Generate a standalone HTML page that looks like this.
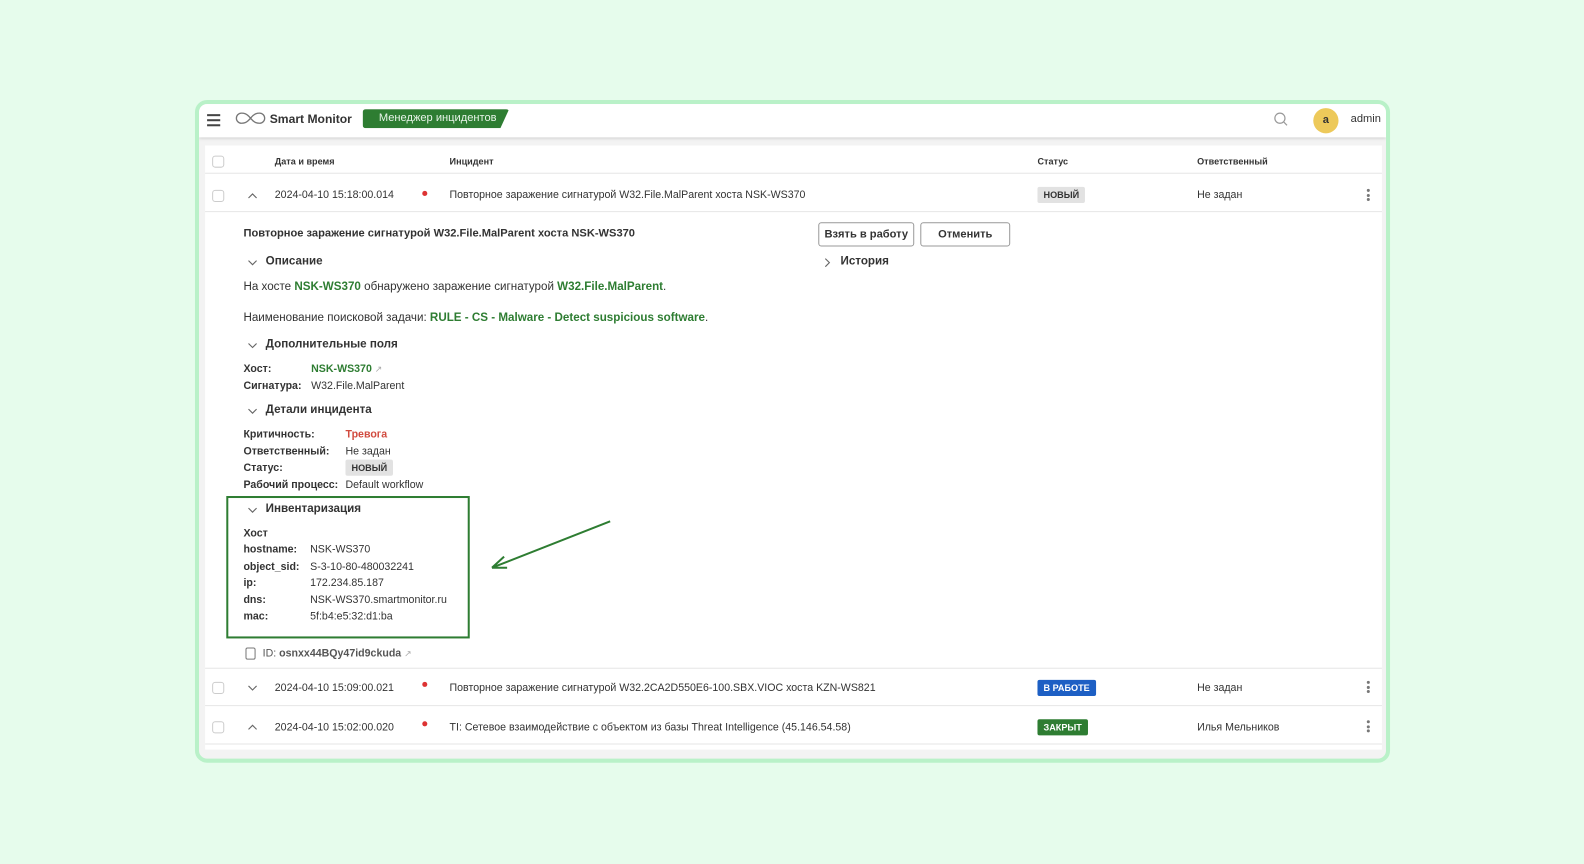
<!DOCTYPE html>
<html><head><meta charset="utf-8"><style>
*{margin:0;padding:0;box-sizing:border-box}
body{width:1584px;height:864px;background:#e6fcec;font-family:"Liberation Sans",sans-serif;color:#333;position:relative;overflow:hidden;font-size:11px}
#wrap{position:absolute;left:0;top:0;width:1568px;height:855px;transform:scale(1.0102);transform-origin:0 0}
.a{position:absolute;white-space:nowrap}
#frame{position:absolute;left:193px;top:99px;width:1183px;height:656px;border:4px solid #b9f1c8;border-radius:12px;background:#f3f3f3;overflow:hidden}
#hdr{position:absolute;left:0;top:0;right:0;height:33px;background:#fff;box-shadow:0 1px 3px rgba(0,0,0,.15)}
#tbl{position:absolute;left:6px;top:41px;width:1165px;height:598px;background:#fff}
.cb{position:absolute;width:12px;height:12px;border:1px solid #ccc;border-radius:3px;background:#fff}
.line{position:absolute;left:0;right:0;height:1px;background:#e6e6e6}
.b{font-weight:bold}
.g{color:#2e7d32;font-weight:bold}
.badge{position:absolute;font-size:9px;font-weight:bold;padding:3px 6px;border-radius:2px}
.dots{position:absolute;width:3px}
.dots i{display:block;width:3px;height:3px;border-radius:50%;background:#777;margin-bottom:1.5px}
.red{position:absolute;width:5px;height:5px;border-radius:50%;background:#d33}
.lbl{font-weight:bold;color:#333}
.t{font-size:10.5px}
</style></head><body><div id="wrap">
<svg width="0" height="0" style="position:absolute"><defs>
<symbol id="dn" viewBox="0 0 10 10"><path d="M1 3L5 7L9 3" fill="none" stroke="#666" stroke-width="1.1"/></symbol>
<symbol id="up" viewBox="0 0 10 10"><path d="M1 7L5 3L9 7" fill="none" stroke="#666" stroke-width="1.1"/></symbol>
<symbol id="rt" viewBox="0 0 10 10"><path d="M3 1L7 5L3 9" fill="none" stroke="#666" stroke-width="1.1"/></symbol>
</defs></svg>
<div id="frame">
 <div id="hdr">
  <div class="a" style="left:8px;top:10px;width:13px"><div style="height:2px;background:#444;margin-bottom:3px"></div><div style="height:2px;background:#444;margin-bottom:3px"></div><div style="height:2px;background:#444"></div></div>
  <svg class="a" style="left:35px;top:7px" width="32" height="14" viewBox="0 0 32 14"><path d="M16 7C12 2 9 2 7 2A5 5 0 0 0 7 12C9 12 12 12 16 7C20 2 23 2 25 2A5 5 0 0 1 25 12C23 12 20 12 16 7Z" fill="none" stroke="#777" stroke-width="1.3"/></svg>
  <div class="a b" style="left:70px;top:8px;font-size:12px;color:#333">Smart Monitor</div>
  <div class="a" style="left:162px;top:5px;width:145px;height:19px;background:#2e7d32;clip-path:polygon(0 0,100% 0,94% 100%,0 100%);border-radius:3px;color:#e8f5e9;font-size:11px;padding:3px 0 0 16px">Менеджер инцидентов</div>
  <svg class="a" style="left:1064px;top:8px" width="14" height="14"><circle cx="6" cy="6" r="5" fill="none" stroke="#999" stroke-width="1.2"/><path d="M10 10L13 13" stroke="#999" stroke-width="1.2"/></svg>
  <div class="a" style="left:1103px;top:4px;width:25px;height:25px;border-radius:50%;background:#edc95a;text-align:center;line-height:25px;font-weight:bold;font-size:11px">a</div>
  <div class="a" style="left:1140px;top:9px;font-size:11px">admin</div>
 </div>
 <div id="tbl">
  <div class="cb" style="left:7px;top:10px"></div>
  <div class="a b" style="left:69px;top:11px;font-size:9px">Дата и время</div>
  <div class="a b" style="left:242px;top:11px;font-size:9px">Инцидент</div>
  <div class="a b" style="left:824px;top:11px;font-size:9px">Статус</div>
  <div class="a b" style="left:982px;top:11px;font-size:9px">Ответственный</div>
  <div class="line" style="top:27px"></div>
  <div class="cb" style="left:7px;top:44px"></div>
  <svg class="a" style="left:42px;top:45px" width="10" height="10"><use href="#up"/></svg>
  <div class="a t" style="left:69px;top:43px">2024-04-10 15:18:00.014</div>
  <div class="red" style="left:215px;top:45px"></div>
  <div class="a t" style="left:242px;top:43px">Повторное заражение сигнатурой W32.File.MalParent хоста NSK-WS370</div>
  <div class="badge" style="left:824px;top:41px;background:#e2e2e2;color:#333">НОВЫЙ</div>
  <div class="a t" style="left:982px;top:43px">Не задан</div>
  <div class="dots" style="left:1150px;top:43px"><i></i><i></i><i></i></div>
  <div class="line" style="top:65px"></div>

  <div class="a b" style="left:38px;top:81px;font-size:11px">Повторное заражение сигнатурой W32.File.MalParent хоста NSK-WS370</div>
  <div class="a b" style="left:607px;top:76px;width:95px;height:24px;border:1px solid #999;border-radius:3px;font-size:11px;text-align:center;line-height:22px">Взять в работу</div>
  <div class="a b" style="left:708px;top:76px;width:89px;height:24px;border:1px solid #999;border-radius:3px;font-size:11px;text-align:center;line-height:22px">Отменить</div>
  <svg class="a" style="left:611px;top:111px" width="10" height="10"><use href="#rt"/></svg>
  <div class="a b" style="left:629px;top:109px;font-size:11.5px">История</div>

  <svg class="a" style="left:42px;top:111px" width="10" height="10"><use href="#dn"/></svg>
  <div class="a b" style="left:60px;top:109px;font-size:11.5px">Описание</div>
  <div class="a" style="left:38px;top:134px;font-size:11.5px">На хосте <span class="g">NSK-WS370</span> обнаружено заражение сигнатурой <span class="g">W32.File.MalParent</span>.</div>
  <div class="a" style="left:38px;top:165px;font-size:11.5px">Наименование поисковой задачи: <span class="g">RULE - CS - Malware - Detect suspicious software</span>.</div>
  <svg class="a" style="left:42px;top:193px" width="10" height="10"><use href="#dn"/></svg>
  <div class="a b" style="left:60px;top:191px;font-size:11.5px">Дополнительные поля</div>
  <div class="a lbl t" style="left:38px;top:215px">Хост:</div><div class="a g t" style="left:105px;top:215px">NSK-WS370 <span style="color:#aaa;font-weight:normal;font-size:9px">&#8599;</span></div>
  <div class="a lbl t" style="left:38px;top:232px">Сигнатура:</div><div class="a t" style="left:105px;top:232px">W32.File.MalParent</div>
  <svg class="a" style="left:42px;top:258px" width="10" height="10"><use href="#dn"/></svg>
  <div class="a b" style="left:60px;top:256px;font-size:11.5px">Детали инцидента</div>
  <div class="a lbl t" style="left:38px;top:280px">Критичность:</div><div class="a b t" style="left:139px;top:280px;color:#d14b3f">Тревога</div>
  <div class="a lbl t" style="left:38px;top:297px">Ответственный:</div><div class="a t" style="left:139px;top:297px">Не задан</div>
  <div class="a lbl t" style="left:38px;top:313px">Статус:</div><div class="badge" style="left:139px;top:311px;background:#e2e2e2;color:#333">НОВЫЙ</div>
  <div class="a lbl t" style="left:38px;top:330px">Рабочий процесс:</div><div class="a t" style="left:139px;top:330px">Default workflow</div>

  <div class="a" style="left:21px;top:347px;width:241px;height:141px;border:2px solid #2e7d32"></div>
  <svg class="a" style="left:42px;top:356px" width="10" height="10"><use href="#dn"/></svg>
  <div class="a b" style="left:60px;top:354px;font-size:11.5px">Инвентаризация</div>
  <div class="a lbl t" style="left:38px;top:378px">Хост</div>
  <div class="a lbl t" style="left:38px;top:394px">hostname:</div><div class="a t" style="left:104px;top:394px">NSK-WS370</div>
  <div class="a lbl t" style="left:38px;top:411px">object_sid:</div><div class="a t" style="left:104px;top:411px">S-3-10-80-480032241</div>
  <div class="a lbl t" style="left:38px;top:427px">ip:</div><div class="a t" style="left:104px;top:427px">172.234.85.187</div>
  <div class="a lbl t" style="left:38px;top:444px">dns:</div><div class="a t" style="left:104px;top:444px">NSK-WS370.smartmonitor.ru</div>
  <div class="a lbl t" style="left:38px;top:460px">mac:</div><div class="a t" style="left:104px;top:460px">5f:b4:e5:32:d1:ba</div>
  <svg class="a" style="left:280px;top:370px" width="125" height="52"><path d="M121 2L4 48M4 48L16 37M4 48L19 48" stroke="#2e7d32" stroke-width="2" fill="none"/></svg>
  <div class="a" style="left:40px;top:497px;width:10px;height:12px;border:1px solid #777;border-radius:2px"></div>
  <div class="a t" style="left:57px;top:497px;color:#555">ID: <b>osnxx44BQy47id9ckuda</b> <span style="color:#aaa;font-size:9px">&#8599;</span></div>
  <div class="line" style="top:517px"></div>

  <div class="cb" style="left:7px;top:531px"></div>
  <svg class="a" style="left:42px;top:532px" width="10" height="10"><use href="#dn"/></svg>
  <div class="a t" style="left:69px;top:531px">2024-04-10 15:09:00.021</div>
  <div class="red" style="left:215px;top:531px"></div>
  <div class="a t" style="left:242px;top:531px">Повторное заражение сигнатурой W32.2CA2D550E6-100.SBX.VIOC хоста KZN-WS821</div>
  <div class="badge" style="left:824px;top:529px;background:#1d5fc4;color:#fff">В РАБОТЕ</div>
  <div class="a t" style="left:982px;top:531px">Не задан</div>
  <div class="dots" style="left:1150px;top:530px"><i></i><i></i><i></i></div>
  <div class="line" style="top:554px"></div>

  <div class="cb" style="left:7px;top:570px"></div>
  <svg class="a" style="left:42px;top:571px" width="10" height="10"><use href="#up"/></svg>
  <div class="a t" style="left:69px;top:570px">2024-04-10 15:02:00.020</div>
  <div class="red" style="left:215px;top:570px"></div>
  <div class="a t" style="left:242px;top:570px">TI: Сетевое взаимодействие с объектом из базы Threat Intelligence (45.146.54.58)</div>
  <div class="badge" style="left:824px;top:568px;background:#2e7d32;color:#fff">ЗАКРЫТ</div>
  <div class="a t" style="left:982px;top:570px">Илья Мельников</div>
  <div class="dots" style="left:1150px;top:569px"><i></i><i></i><i></i></div>
  <div class="line" style="top:592px"></div>
 </div>
</div>
</div></body></html>
